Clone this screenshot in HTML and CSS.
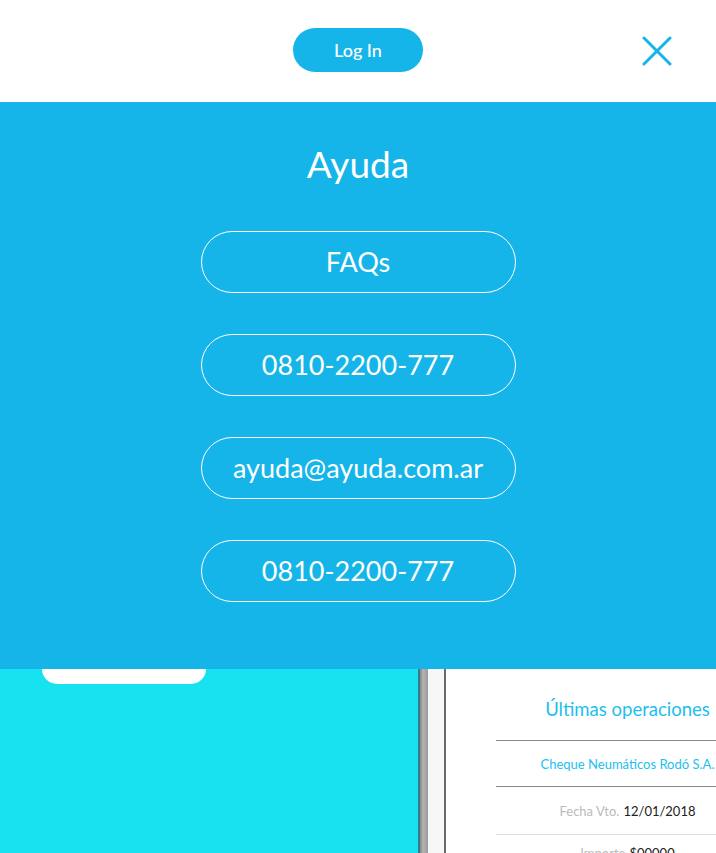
FILE: index.html
```html
<!DOCTYPE html>
<html lang="es">
<head>
<meta charset="utf-8">
<title>Ayuda</title>
<link rel="stylesheet" href="styles.css">
</head>
<body>
<header class="topbar">
  <a class="login-btn" href="#">Log In</a>
  <button class="close-btn" aria-label="Cerrar">
    <svg width="30" height="30" viewBox="0 0 30 30"><path d="M2 2 L28 28 M28 2 L2 28" stroke="#16b5e8" stroke-width="3" stroke-linecap="round" fill="none"/></svg>
  </button>
</header>
<section class="help">
  <h1 class="help-title">Ayuda</h1>
  <ul class="help-list">
    <li><a class="pill" href="#">FAQs</a></li>
    <li><a class="pill" href="#">0810-2200-777</a></li>
    <li><a class="pill" href="#">ayuda@ayuda.com.ar</a></li>
    <li><a class="pill" href="#">0810-2200-777</a></li>
  </ul>
</section>
<section class="below">
  <div class="hero">
    <div class="hero-pill"></div>
  </div>
  <div class="frame-shadow"></div>
  <div class="frame-edge"></div>
  <div class="frame-bezel"></div>
  <div class="frame-line"></div>
  <div class="screen">
    <div class="ops">
      <div class="ops-title">Últimas operaciones</div>
      <div class="ops-row ops-name">Cheque Neumáticos Rodó S.A.</div>
      <div class="ops-row ops-date"><span class="muted">Fecha Vto.</span> 12/01/2018</div>
      <div class="ops-row ops-amount"><span class="muted">Importe</span> $00000</div>
    </div>
  </div>
</section>
</body>
</html>
```
FILE: styles.css
```css
* { box-sizing: border-box; }
html, body { margin: 0; padding: 0; }
body {
  width: 716px;
  height: 853px;
  overflow: hidden;
  font-family: "Lato", "Noto Sans", sans-serif;
  background: #fff;
}
.topbar {
  height: 102px;
  display: flex;
  align-items: center;
  justify-content: center;
  position: relative;
  background: #fff;
}
.login-btn {
  width: 130px;
  height: 44px;
  border-radius: 22px;
  background: #16b5e9;
  color: #fff;
  text-decoration: none;
  font-size: 18px;
  font-weight: 500;
  display: flex;
  align-items: center;
  justify-content: center;
  margin-top: -2px;
}
.close-btn {
  position: absolute;
  right: 44px;
  top: 36px;
  width: 30px;
  height: 30px;
  padding: 0;
  border: 0;
  background: none;
  display: block;
}
.close-btn svg { display: block; }
.help {
  height: 567px;
  background: #16b5e9;
  display: flex;
  flex-direction: column;
  align-items: center;
  padding-top: 40px;
}
.help-title {
  margin: 0;
  color: #fff;
  font-size: 37px;
  font-weight: 400;
  line-height: 44px;
}
.help-list {
  list-style: none;
  margin: 45px 0 0;
  padding: 0;
  display: flex;
  flex-direction: column;
  gap: 41px;
}
.pill {
  width: 315px;
  height: 62px;
  border: 1px solid #fff;
  border-radius: 31px;
  color: #fff;
  text-decoration: none;
  font-size: 27px;
  display: flex;
  align-items: center;
  justify-content: center;
  padding-bottom: 2px;
}
.below {
  height: 184px;
  display: flex;
  overflow: hidden;
}
.hero {
  width: 418px;
  background: #17e3f0;
  padding-left: 42px;
}
.hero-pill {
  width: 164px;
  height: 15px;
  background: #fff;
  border-radius: 0 0 18px 18px;
}
.frame-shadow { width: 2px; background: linear-gradient(90deg, #1a8a98, #5a6a70); }
.frame-edge { width: 8px; background: linear-gradient(90deg, #888, #b4b4b4 40%, #9a9a9a); }
.frame-bezel { width: 16px; background: #f7f7f7; }
.frame-line { width: 2px; background: #6a6a6a; }
.screen {
  flex: 1;
  background: #fff;
  padding-left: 50px;
  overflow: hidden;
}
.ops {
  width: 263px;
  text-align: center;
}
.ops-title {
  color: #1cc0ec;
  font-size: 18.5px;
  line-height: 26px;
  padding: 27px 0 18px;
  border-bottom: 1px solid #888;
}
.ops-row {
  font-size: 13px;
  height: 46px;
  display: flex;
  align-items: center;
  justify-content: center;
}
.ops-name { color: #1cc0ec; border-bottom: 1px solid #888; height: 46px; }
.ops-date { color: #222; border-bottom: 1px solid #ddd; height: 48px; }
.ops-amount { color: #222; align-items: flex-start; padding-top: 10px; }
.muted { color: #bbb; margin-right: 4px; }
```
